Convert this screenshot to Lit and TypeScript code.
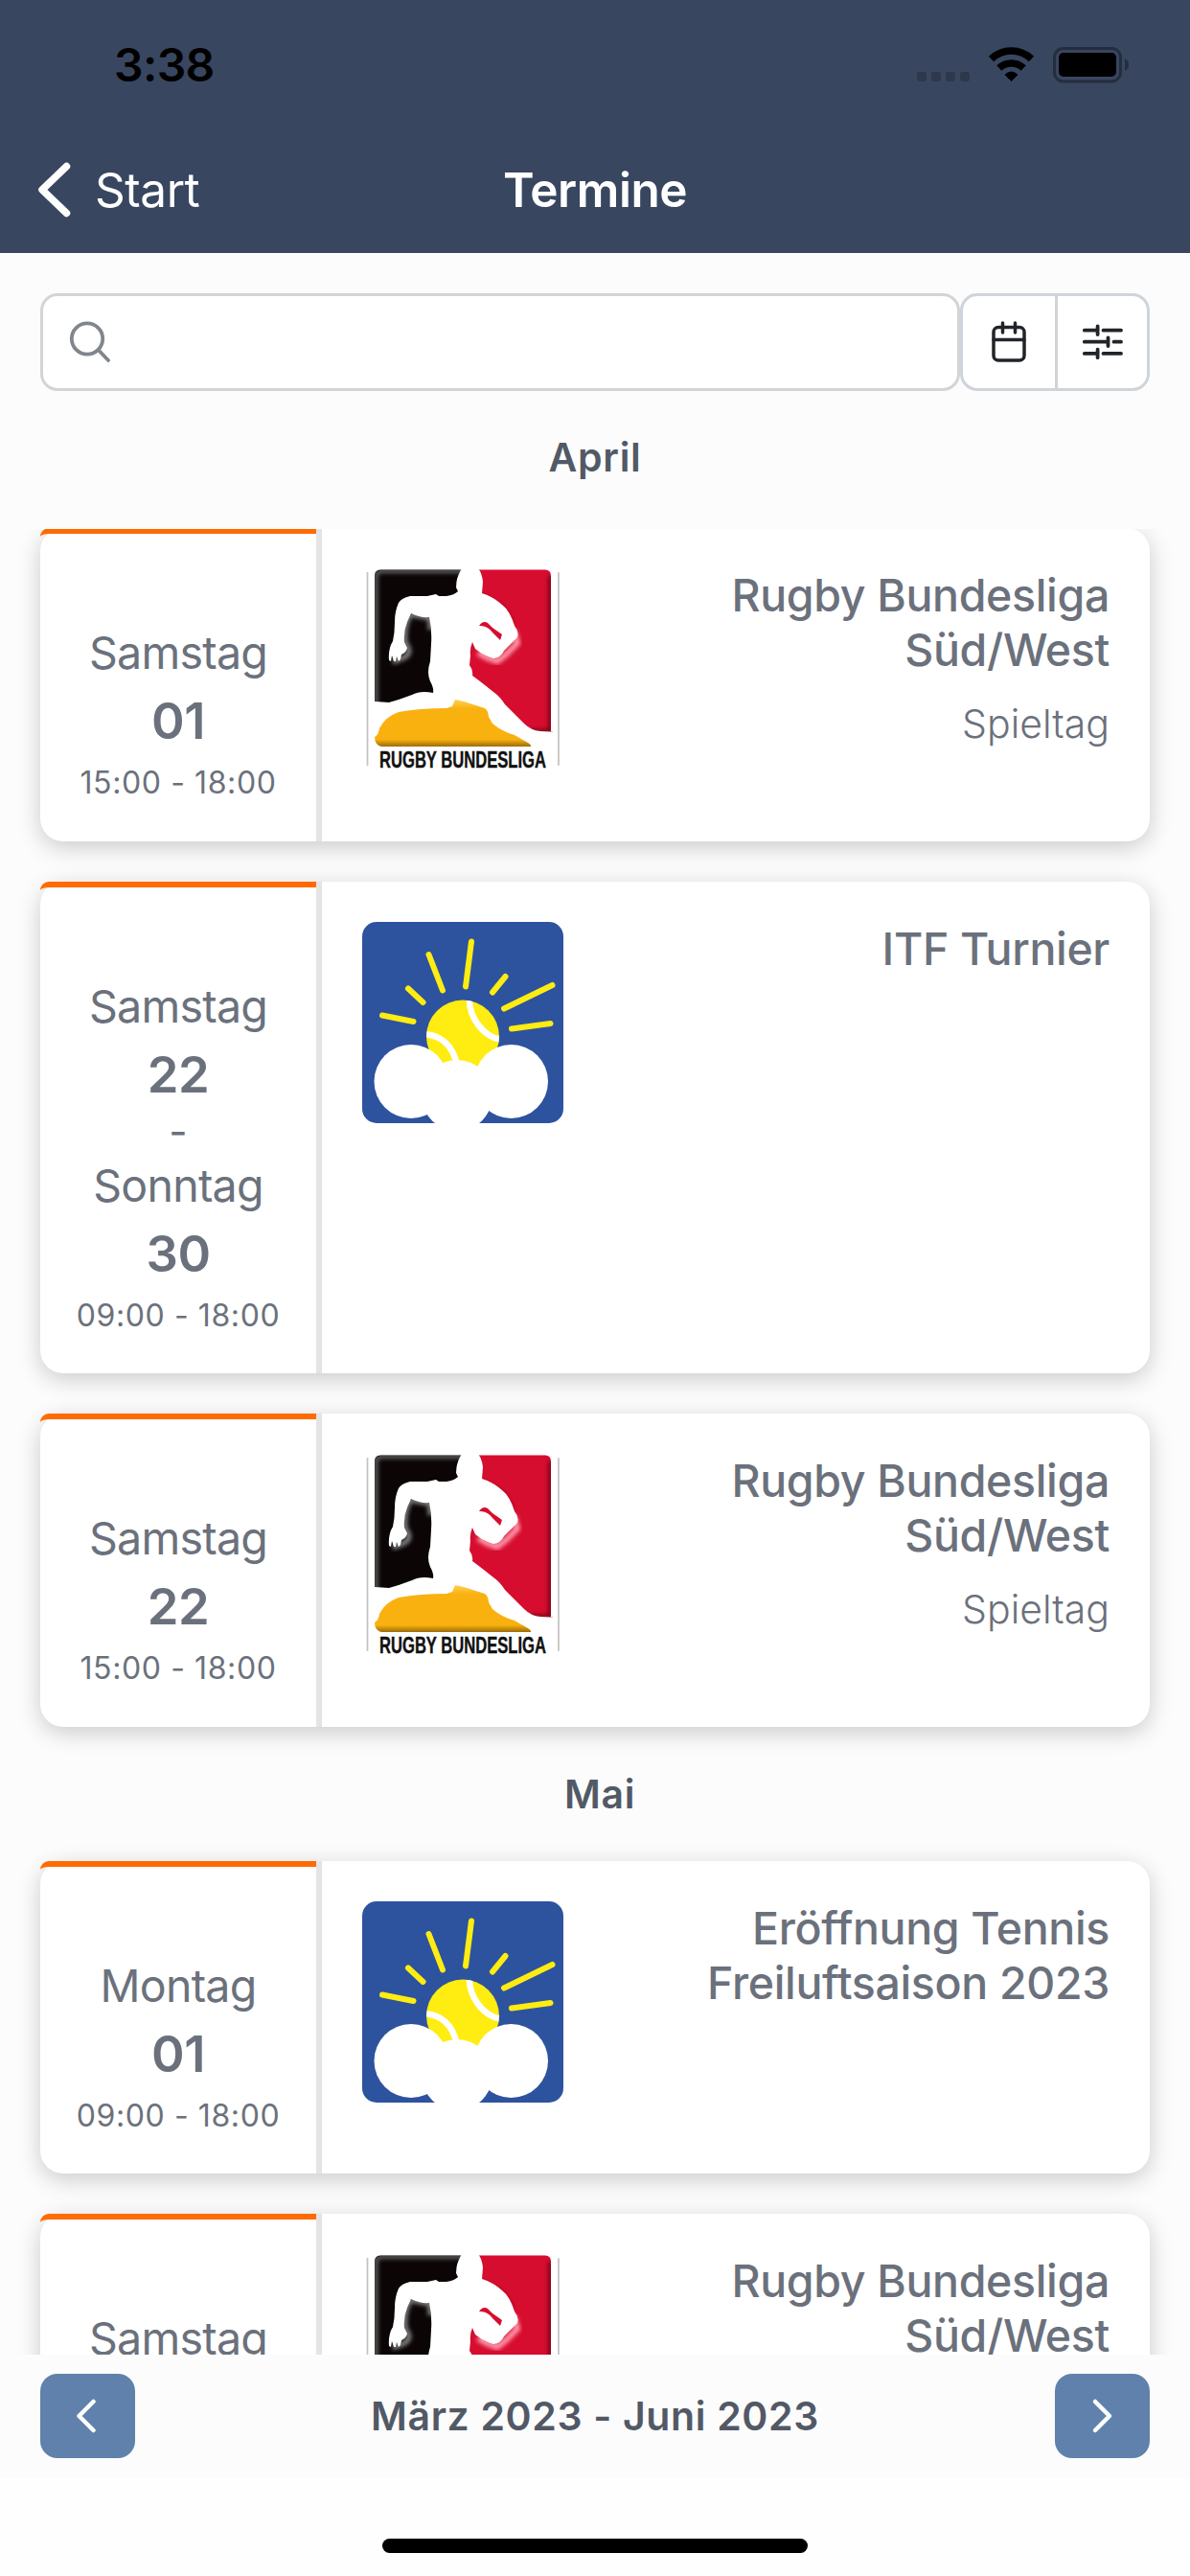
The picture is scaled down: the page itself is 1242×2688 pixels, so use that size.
import { LitElement, html, css, svg, nothing } from "lit";
import { customElement, property } from "lit/decorators.js";

type Club = "rugby" | "tennis";

interface TeamEvent {
  days: { name: string; date: string }[];
  time: string;
  title: string[];
  info?: string;
  club: Club;
}

interface Month {
  name: string;
  events: TeamEvent[];
}

const rugbyDay = (date: string): TeamEvent => ({
  days: [{ name: "Samstag", date }],
  time: "15:00 - 18:00",
  title: ["Rugby Bundesliga", "Süd/West"],
  info: "Spieltag",
  club: "rugby",
});

const months: Month[] = [
  {
    name: "April",
    events: [
      rugbyDay("01"),
      {
        days: [
          { name: "Samstag", date: "22" },
          { name: "Sonntag", date: "30" },
        ],
        time: "09:00 - 18:00",
        title: ["ITF Turnier"],
        club: "tennis",
      },
      rugbyDay("22"),
    ],
  },
  {
    name: "Mai",
    events: [
      {
        days: [{ name: "Montag", date: "01" }],
        time: "09:00 - 18:00",
        title: ["Eröffnung Tennis", "Freiluftsaison 2023"],
        club: "tennis",
      },
      rugbyDay("06"),
    ],
  },
];

@customElement("club-logo")
class ClubLogo extends LitElement {
  static styles = css`
    :host {
      display: block;
      width: 210px;
      height: 210px;
      border-radius: 15px;
      overflow: hidden;
    }
    svg {
      display: block;
    }
    .caption {
      font-family: "Liberation Sans", Arial, sans-serif;
      font-weight: 700;
      font-size: 23px;
      fill: #111;
      stroke: #111;
      stroke-width: 0.4px;
    }
  `;

  @property() club: Club = "rugby";

  tennis() {
    return html`
      <svg width="210" height="210" viewBox="0 0 210 210">
        <defs>
          <clipPath id="ball"><circle cx="105" cy="119.500" r="38" /></clipPath>
        </defs>
        <rect width="210" height="210" fill="#2d539f" />
        <circle cx="105" cy="119.500" r="38" fill="#ffec10" />
        <g clip-path="url(#ball)" fill="none" stroke="#fff" stroke-width="6.500">
          <path d="M112 76C110 99 126 120 146 123" />
          <path d="M62 117C81 117 95 128 99 150" />
        </g>
        <g stroke="#ffec10" stroke-width="6" stroke-linecap="round">
          <path d="M21 97.500L53.500 104" />
          <path d="M48 69.500L63.500 84" />
          <path d="M69.500 34L84 71.500" />
          <path d="M114 20.500L108 67.500" />
          <path d="M149.500 57L136 73.500" />
          <path d="M198.500 66L148 90.500" />
          <path d="M196.500 106L156 111.500" />
        </g>
        <g fill="#fff">
          <circle cx="51" cy="166.500" r="38.500" />
          <circle cx="155.500" cy="166.500" r="38.500" />
          <circle cx="99" cy="181" r="37" />
        </g>
      </svg>
    `;
  }

  rugby() {
    return html`
      <svg width="210" height="210" viewBox="0 0 210 210">
        <defs>
          <clipPath id="plate"><path d="M19 2H191Q197 2 197 8V170H202V188H13V8Q13 2 19 2Z" /></clipPath>
          <filter id="soft"><feGaussianBlur stdDeviation="2" /></filter>
          <linearGradient id="gold" x1="0" y1="0" x2="0" y2="1">
            <stop offset="0" stop-color="#ffd050" />
            <stop offset="0.200" stop-color="#f9b110" />
            <stop offset="0.850" stop-color="#f9b110" />
            <stop offset="1" stop-color="#9c6b08" />
          </linearGradient>
        </defs>
        <rect width="210" height="210" fill="#fff" />
        <path d="M19 1.500H110V150H13V8Q13 1.500 19 1.500Z" fill="#0b0506" />
        <path d="M110 1.500H191Q197 1.500 197 8V170.500H110Z" fill="#d60d2f" />
        <g clip-path="url(#plate)">
          <path d="M14.500 150V9Q14.500 3 20 3H110" fill="none" stroke="#666" stroke-width="4" filter="url(#soft)" />
          <path d="M120 3H191" fill="none" stroke="#ff8298" stroke-width="7" filter="url(#soft)" />
          <path d="M196.500 8V170H175" fill="none" stroke="#6b0818" stroke-width="4" filter="url(#soft)" />
          <path d="M50 48L71 52L71 64M50 48Q43 62 45 78Q53 88 44 93L32 98" fill="none" stroke="#888" stroke-width="5" filter="url(#soft)" />
          <path d="M158 65L162 78L150 90L141 97Q130 94 121 88" fill="none" stroke="#ff9aac" stroke-width="6" filter="url(#soft)" />
          <path d="M125 29L145 40L156 56" fill="none" stroke="#8c0a20" stroke-width="4" filter="url(#soft)" />
        </g>
        <path
          d="M104 0
            C101 5 99 10 98.500 14 L98 20 L100 24 Q96 28 88 29 L80 29 L77 27
            L68 29 L50 29 Q41 31 38 36 Q34 45 34 56 Q34 67 32 76 Q27 84 28 96
            L30 97 L31 91 L33 97 L35 97 L36 92 L38 97 L40 95 L41 90
            Q46 88 47 83 L44 77 Q43 66 47 56 L51 47 Q61 52 70 51
            Q73 64 72 79 L71 97 Q67 109 71 118 Q75 125 74 130
            Q61 127 52 132 Q39 137 28 140 L13 139 V206 H203 V171
            L186 170 Q176 169 169 162 L149 142 Q144 134 137 129 Q122 117 115 112
            Q116 106 112 101 L113 91 Q112 84 115 77
            L118 84 Q126 91 137 94 Q145 93 148 86
            Q156 78 162 72 Q164 66 159 60 Q154 44 146 38 Q136 29 125 26
            L126 14 Q125 5 121 0Z"
          fill="#fff"
        />
        <path d="M122 60Q126 54 131 57L136 62L146 69L144 75L136 67Q130 59 122 60Z" fill="#d60d2f" />
        <path
          d="M13 176Q17 174 18 167Q24 155 38 150Q60 146 88 146L94 144L97 137L106 139L128 146
            Q132 149 132 155L136 162Q145 170 159 174L173 182Q177 185 176 186H20Q13 184 13 176Z"
          fill="url(#gold)"
        />
        <path d="M5.500 4V206M205 4V206" stroke="#c4c4c4" stroke-width="1.800" />
        <text class="caption" x="18" y="207.500" textLength="174" lengthAdjust="spacingAndGlyphs">RUGBY BUNDESLIGA</text>
      </svg>
    `;
  }

  render() {
    return this.club === "tennis" ? this.tennis() : this.rugby();
  }
}

@customElement("event-card")
class EventCard extends LitElement {
  static styles = css`
    :host {
      display: block;
    }
    .card {
      display: flex;
      border-radius: 24px;
      background: #fff;
      box-shadow: 0 6px 24px rgba(0, 0, 0, 0.2);
      color: #6b717c;
    }
    .date {
      box-sizing: border-box;
      width: 288px;
      display: flex;
      flex-direction: column;
      align-items: center;
      padding: 94px 0 28.500px;
      border-top: 6px solid #ff6b00;
      border-top-left-radius: 9px;
    }
    .day {
      font-size: 46.500px;
      line-height: 60px;
      height: 68px;
      letter-spacing: -0.750px;
    }
    .number {
      font-size: 52.500px;
      font-weight: 600;
      line-height: 66px;
      height: 66px;
      letter-spacing: -0.400px;
    }
    .until {
      font-size: 42px;
      line-height: 54px;
      height: 53px;
    }
    .time {
      margin-top: 10px;
      font-size: 32px;
      line-height: 44px;
      height: 54px;
      letter-spacing: 0.600px;
    }
    .divider {
      width: 6px;
      background: #e4e4e4;
    }
    .body {
      flex: 1;
      display: flex;
      justify-content: space-between;
      padding: 42px 42px 0;
    }
    .text {
      text-align: right;
    }
    .title {
      font-size: 46.500px;
      font-weight: 500;
      line-height: 57px;
      letter-spacing: -0.350px;
    }
    .info {
      margin-top: 21px;
      font-size: 41px;
      font-weight: 300;
      line-height: 54px;
    }
  `;

  @property({ attribute: false }) event!: TeamEvent;

  render() {
    const { days, time, title, info, club } = this.event;
    return html`
      <div class="card">
        <div class="date">
          ${days.map(
            (day, i) => html`
              ${i > 0 ? html`<div class="until">-</div>` : nothing}
              <div class="day">${day.name}</div>
              <div class="number">${day.date}</div>
            `
          )}
          <div class="time">${time}</div>
        </div>
        <div class="divider"></div>
        <div class="body">
          <club-logo club=${club}></club-logo>
          <div class="text">
            ${title.map((line) => html`<div class="title">${line}</div>`)}
            ${info ? html`<div class="info">${info}</div>` : nothing}
          </div>
        </div>
      </div>
    `;
  }
}

@customElement("app-root")
class AppRoot extends LitElement {
  static styles = css`
    :host {
      display: flex;
      flex-direction: column;
      width: 1242px;
      height: 2688px;
      overflow: hidden;
      background: #fefefe;
      font-family: Inter, "Liberation Sans", sans-serif;
    }
    .header {
      height: 264px;
      background: #394660;
    }
    .status {
      display: flex;
      justify-content: space-between;
      height: 132px;
    }
    .clock {
      margin: 38px 0 0 119px;
      font-size: 48px;
      font-weight: 600;
      line-height: 60px;
      letter-spacing: -0.600px;
    }
    .status svg {
      margin-right: 60px;
    }
    .nav {
      display: grid;
      grid-template-columns: 1fr auto 1fr;
      align-items: center;
      height: 132px;
      color: #fff;
      font-size: 49.500px;
      line-height: 60px;
      letter-spacing: -0.450px;
    }
    .back {
      display: flex;
      align-items: center;
      gap: 24px;
      padding-left: 37px;
    }
    .heading {
      font-weight: 600;
    }
    .search {
      display: flex;
      padding: 42px 42px 0;
      background: #fcfcfc;
    }
    .field {
      box-sizing: border-box;
      flex: 1;
      height: 102px;
      padding: 24px 25px;
      border: 3px solid #d4d4d8;
      border-radius: 18px;
      background: #fff;
    }
    .buttons {
      box-sizing: border-box;
      display: flex;
      width: 198px;
      height: 102px;
      border: 3px solid #ced4da;
      border-radius: 18px;
      background: #fff;
    }
    .button {
      flex: 1;
      display: flex;
      align-items: center;
      justify-content: center;
    }
    .button + .button {
      flex: 0 0 93px;
      border-left: 3px solid #ced4da;
    }
    .month {
      color: #525966;
      text-align: center;
      font-size: 41px;
      font-weight: 600;
      line-height: 54px;
      letter-spacing: 0.650px;
      padding: 43px 0 47px 10px;
      height: 50px;
    }
    .month:first-child {
      position: relative;
      z-index: 1;
      height: 55px;
      margin-bottom: -0.600px;
      padding: 42px 0 47px;
      background: #fcfcfc;
    }
    .list {
      flex: 1;
      min-height: 0;
      overflow: hidden;
      background: #fcfcfc;
    }
    .events {
      display: flex;
      flex-direction: column;
      gap: 42px;
      padding: 0 42px;
    }
    .footer {
      display: flex;
      align-items: center;
      justify-content: space-between;
      box-sizing: border-box;
      height: 129px;
      padding: 0 42px 1px;
      background: #fcfcfc;
      color: #525966;
      font-size: 41px;
      font-weight: 600;
      letter-spacing: 0.650px;
    }
    .pager {
      display: flex;
      align-items: center;
      justify-content: center;
      width: 99px;
      height: 88px;
      border-radius: 18px;
      background: #5f81ab;
    }
    .home {
      display: flex;
      justify-content: center;
      height: 102px;
      padding-top: 63px;
      box-sizing: border-box;
    }
    .indicator {
      width: 444px;
      height: 15px;
      border-radius: 8px;
      background: #000;
    }
  `;

  chevron(points: string) {
    return svg`<path d=${points} fill="none" stroke="#fff" stroke-width="4.500" stroke-linecap="round" stroke-linejoin="round" />`;
  }

  render() {
    return html`
      <div class="header">
        <div class="status">
          <div class="clock">3:38</div>
          <svg width="225" height="132" viewBox="957 0 225 132">
            <g fill="#2d384d">
              <rect x="957" y="75" width="10" height="10" rx="3" />
              <rect x="972" y="75" width="10" height="10" rx="3" />
              <rect x="987" y="75" width="10" height="10" rx="3" />
              <rect x="1002" y="75" width="10" height="10" rx="3" />
            </g>
            <path d="M1055.500 84.500L1049 78Q1055.500 72 1062 78Z" stroke="#000" stroke-linejoin="round" />
            <g fill="none" stroke="#000" stroke-width="7.500">
              <path d="M1034.500 61.500A30 30 0 0 1 1076.500 61.500" />
              <path d="M1042.800 71A18.500 18.500 0 0 1 1068.200 71" />
            </g>
            <rect x="1100.500" y="50.500" width="69" height="34.500" rx="9.500" fill="none" stroke="#242d3f" stroke-width="3" />
            <rect x="1105" y="55" width="60" height="25" rx="5" />
            <path d="M1174 61Q1178 63 1178 67.500T1174 74Z" fill="#242d3f" />
          </svg>
        </div>
        <div class="nav">
          <div class="back">
            <svg width="38" height="60" viewBox="0 0 38 60">
              <path d="M32.500 5.500L7 30L32.500 54.500" fill="none" stroke="#fff" stroke-width="7.500" stroke-linecap="round" stroke-linejoin="round" />
            </svg>
            <span>Start</span>
          </div>
          <div class="heading">Termine</div>
        </div>
      </div>

      <div class="search">
        <div class="field">
          <svg width="48" height="48" viewBox="0 0 48 48" fill="none" stroke="#80868c" stroke-width="3.800" stroke-linecap="round">
            <circle cx="21" cy="20.500" r="16.200" />
            <path d="M33 32.500L43 43" />
          </svg>
        </div>
        <div class="buttons">
          <div class="button">
            <svg width="48" height="48" viewBox="0 0 48 48" fill="none" stroke="#212529" stroke-width="3.500" stroke-linecap="round">
              <rect x="8" y="8.500" width="32" height="34.500" rx="5" />
              <path d="M8 21.500H40M17.500 4V14M30.500 4V14" />
            </svg>
          </div>
          <div class="button">
            <svg width="48" height="48" viewBox="0 0 48 48" fill="none" stroke="#212529" stroke-width="3.800" stroke-linecap="round">
              <path d="M4.800 11.700H18M24.500 11.700H43M4.800 23.700H29M35.500 23.700H43M4.800 35.900H18M24.500 35.900H43" />
              <path d="M18.600 7.500V16M29.500 19.500V28M18.600 31.700V40.200" />
            </svg>
          </div>
        </div>
      </div>

      <div class="list">
        ${months.map(
          (month) => html`
            <div class="month">${month.name}</div>
            <div class="events">
              ${month.events.map((event) => html`<event-card .event=${event}></event-card>`)}
            </div>
          `
        )}
      </div>

      <div class="footer">
        <div class="pager">
          <svg width="24" height="40" viewBox="0 0 24 40">${this.chevron("M17.5 5L2.5 20L17.5 35")}</svg>
        </div>
        <span>März 2023 - Juni 2023</span>
        <div class="pager">
          <svg width="24" height="40" viewBox="0 0 24 40">${this.chevron("M5 5L20 20L5 35")}</svg>
        </div>
      </div>
      <div class="home"><div class="indicator"></div></div>
    `;
  }
}
